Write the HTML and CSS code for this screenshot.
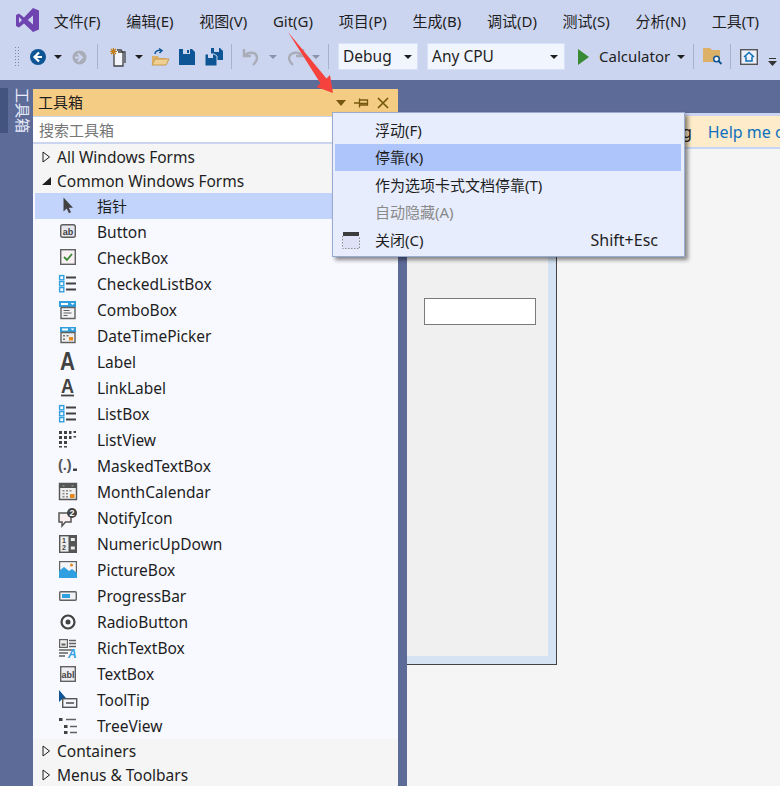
FILE: index.html
```html
<!DOCTYPE html>
<html lang="zh">
<head>
<meta charset="utf-8">
<title>Visual Studio</title>
<link rel="stylesheet" href="styles.css">
</head>
<body>
<header class="chrome">
  <nav class="menubar">
    <svg class="logo" width="26" height="26" viewBox="0 0 26 26"><path fill="#6f44b0" d="M19 1l6 2.500v19l-6 2.500-9-8.600-5 4-3-1.500v-11l3-1.500 5 4zM19 8.500l-5.200 4.500 5.200 4.500zM5 10v6l3-3z"/></svg>
    <span>文件(F)</span><span>编辑(E)</span><span>视图(V)</span><span>Git(G)</span><span>项目(P)</span><span>生成(B)</span><span>调试(D)</span><span>测试(S)</span><span>分析(N)</span><span>工具(T)</span>
  </nav>
  <div class="toolbar">
    <i class="grip"></i>
    <svg class="t-back" width="18" height="18" viewBox="0 0 18 18"><circle cx="9" cy="9" r="8" fill="#0e5595"/><path d="M10 4.500L5.500 9l4.500 4.500M6 9h7" fill="none" stroke="#fff" stroke-width="2.200"/></svg>
    <i class="caret t-c1"></i>
    <svg class="t-fwd" width="17" height="17" viewBox="0 0 17 17"><circle cx="8.500" cy="8.500" r="7" fill="#a9adb8"/><path d="M7 4.500l4 4-4 4M4 8.500h6" fill="none" stroke="#ccd5f0" stroke-width="1.800"/></svg>
    <i class="sep t-s1"></i>
    <svg class="t-new" width="20" height="20" viewBox="0 0 20 20"><path d="M5 7v12h9V6l-2-3H8" fill="#f3f5fb" stroke="#424242" stroke-width="1.300"/><path d="M9 5h7v11" fill="none" stroke="#424242" stroke-width="1.300"/><path d="M4.500 1v7M1 4.500h7M2 2l5 5M7 2L2 7" stroke="#c27d1a" stroke-width="1.200"/></svg>
    <i class="caret t-c2"></i>
    <svg class="t-open" width="19" height="18" viewBox="0 0 19 18"><path d="M1 17V8h6l1 2h7v7z" fill="#dcb067"/><path d="M1 17l3-6h14l-3 6z" fill="#f0cf93" stroke="#c99a4b"/><path d="M4 6c0-3 3-4 6-3.500M8 .5l3 2-2.500 2.500" fill="none" stroke="#0e5595" stroke-width="1.500"/></svg>
    <svg class="t-save" width="16" height="16" viewBox="0 0 16 16"><path d="M0 0h13l3 3v13H0z" fill="#0e5595"/><path d="M4 0h7v5H4z" fill="#ccd5f0"/><path d="M8 1h2v3H8z" fill="#0e5595"/><path d="M3 9h10v7H3z" fill="#0e5595"/></svg>
    <svg class="t-saveall" width="18" height="18" viewBox="0 0 18 18"><path d="M6 0h9l3 3v9H6z" fill="#0e5595"/><path d="M9 0h5v4H9z" fill="#ccd5f0"/><path d="M0 6h9l3 2v10H0z" fill="#0e5595" stroke="#ccd5f0"/><path d="M3 6h5v4H3z" fill="#ccd5f0"/></svg>
    <i class="sep t-s2"></i>
    <svg class="t-undo" width="17" height="18" viewBox="0 0 17 18"><path d="M2 1v7h7M2.500 8C6 3 15 3.500 15 10c0 3-2 5-4 7" fill="none" stroke="#a9adb8" stroke-width="2.400"/></svg>
    <i class="caret off t-c3"></i>
    <svg class="t-redo" width="20" height="18" viewBox="0 0 20 18"><path d="M18 1v7h-7M17.500 8C14 3 5 3.500 4 10c0 3 2 5 4 7" fill="none" stroke="#a9adb8" stroke-width="2.400"/></svg>
    <i class="caret off t-c4"></i>
    <i class="sep t-s3"></i>
    <div class="combo c-debug"><span>Debug</span><i class="caret"></i></div>
    <div class="combo c-cpu"><span>Any CPU</span><i class="caret"></i></div>
    <svg class="t-play" width="11" height="16" viewBox="0 0 11 16"><path d="M0 0l11 8-11 8z" fill="#388a34"/></svg>
    <span class="t-run">Calculator</span>
    <i class="caret t-c5"></i>
    <i class="sep t-s4"></i>
    <svg class="t-find" width="19" height="17" viewBox="0 0 19 17"><path d="M0 14V0h7l2 2h8v12z" fill="#dcb067"/><circle cx="13.500" cy="11" r="2.800" fill="#f3f5fb" stroke="#0e5595" stroke-width="1.500"/><path d="M15.500 13l3 3" stroke="#0e5595" stroke-width="1.800"/></svg>
    <i class="sep t-s5"></i>
    <svg class="t-home" width="18" height="16" viewBox="0 0 18 16"><rect x=".7" y=".7" width="16.600" height="14.600" fill="#ecf0fb" stroke="#555"  stroke-width="1.400"/><path d="M4 8l5-4.500L14 8M6 7.500V12h6V7.500" fill="none" stroke="#0e6fb5" stroke-width="1.500"/></svg>
    <svg class="t-more" width="9" height="8" viewBox="0 0 9 8"><path d="M1 0h7v1H1zM0 3h9L4.500 8z" fill="#333"/></svg>
  </div>
</header>

<main class="workspace">
  <aside class="strip">
    <i class="strip-mark"></i>
    <span class="strip-tab">工具箱</span>
  </aside>

  <section class="toolbox">
    <div class="tb-title">
      <span class="tb-name">工具箱</span>
      <svg class="tb-btn" width="12" height="6" viewBox="0 0 12 6"><path d="M1 0h10L6 6z" fill="#755710"/></svg>
      <svg class="tb-btn" width="16" height="10" viewBox="0 0 16 10"><path d="M0 5h5M5.500 .5v9M5.500 2h8v5h-8" fill="none" stroke="#755710" stroke-width="1.300"/><path d="M5.500 5.500h8" stroke="#755710" stroke-width="1.600"/></svg>
      <svg class="tb-btn" width="12" height="12" viewBox="0 0 12 12"><path d="M1 1l10 10M11 1L1 11" stroke="#755710" stroke-width="1.700"/></svg>
    </div>
    <div class="tb-search">搜索工具箱</div>
    <div class="tb-list">
      <div class="group"><svg width="9" height="12" viewBox="0 0 9 12"><path d="M1 1l6.500 5L1 11z" fill="#f5f5f5" stroke="#1e1e1e"/></svg><span>All Windows Forms</span></div>
      <div class="group"><svg width="9" height="12" viewBox="0 0 9 12"><path d="M9 2v8H0z" fill="#1e1e1e"/></svg><span>Common Windows Forms</span></div>

      <div class="item selected"><svg width="20" height="20" viewBox="0 0 20 20"><path d="M5.500 1.500v14l3.200-3 2.300 4.700 2-1-2.200-4.400h4.200z" fill="#424242"/></svg><span>指针</span></div>

      <div class="item"><svg width="20" height="20" viewBox="0 0 20 20"><rect x="2.700" y="2.700" width="14.600" height="12.600" rx="2" fill="#e6e7ee" stroke="#5e5e5e" stroke-width="1.400"/><text class="ico-t" x="10" y="12.500" text-anchor="middle" font-size="9.500">ab</text></svg><span>Button</span></div>

      <div class="item"><svg width="20" height="20" viewBox="0 0 20 20"><rect x="2.700" y="1.700" width="14.600" height="14.600" fill="#f8f0f2" stroke="#616161" stroke-width="1.400"/><path d="M6 9l3 3 5-6" fill="none" stroke="#388a34" stroke-width="1.800"/></svg><span>CheckBox</span></div>

      <div class="item"><svg width="20" height="20" viewBox="0 0 20 20"><g fill="#f8f9ff" stroke="#2f9fe0" stroke-width="1.400"><rect x="1.600" y="1.600" width="4.200" height="4.200"/><rect x="1.600" y="7.600" width="4.200" height="4.200"/><rect x="1.600" y="13.600" width="4.200" height="4.200"/></g><path d="M8 3.500h10M8 9.500h10M8 15.500h10" stroke="#424242" stroke-width="2"/></svg><span>CheckedListBox</span></div>

      <div class="item"><svg width="20" height="20" viewBox="0 0 20 20"><path d="M1 1h17v6H1z" fill="#2f9fe0"/><path d="M3 3h7v2H3zM12.500 3h4l-2 2z" fill="#fff"/><path d="M3 7.500h14v11H3z" fill="#f3f3f6" stroke="#616161" stroke-width="1.400"/><path d="M5.500 10.500h6M5.500 13h8M5.500 15.500h4" stroke="#616161" stroke-width="1.200"/></svg><span>ComboBox</span></div>

      <div class="item"><svg width="20" height="20" viewBox="0 0 20 20"><path d="M2 1h16v5H2z" fill="#2f9fe0"/><path d="M4 2.500h6v2H4zM12.500 2.500h4l-2 2z" fill="#fff"/><path d="M3 6.500h14v10H3z" fill="#eee" stroke="#616161" stroke-width="1.400"/><path d="M5 9h2v1.500H5zM8.500 9h2v1.500h-2zM5 12.500h2V14H5z" fill="#757575"/><path d="M11 11h4v3.500h-4z" fill="#e5871d"/></svg><span>DateTimePicker</span></div>

      <div class="item"><svg width="20" height="20" viewBox="0 0 20 20"><text class="ico-a" x="2" y="18" font-size="25" textLength="15" lengthAdjust="spacingAndGlyphs">A</text></svg><span>Label</span></div>

      <div class="item"><svg width="20" height="20" viewBox="0 0 20 20"><text class="ico-a" x="3" y="15" font-size="21" textLength="13" lengthAdjust="spacingAndGlyphs">A</text><path d="M3 17.500h13" stroke="#424242" stroke-width="1.800"/></svg><span>LinkLabel</span></div>

      <div class="item"><svg width="20" height="20" viewBox="0 0 20 20"><g fill="#f8f9ff" stroke="#2f9fe0" stroke-width="1.400"><rect x="1.600" y="1.600" width="4.200" height="4.200"/><rect x="1.600" y="7.600" width="4.200" height="4.200"/><rect x="1.600" y="13.600" width="4.200" height="4.200"/></g><path d="M8 3.500h10M8 9.500h10M8 15.500h10" stroke="#424242" stroke-width="2"/></svg><span>ListBox</span></div>

      <div class="item"><svg width="20" height="20" viewBox="0 0 20 20"><path d="M1 1h3v3H1zM6 1h3v3H6zM11 1h2.500v3H11zM15.500 1h2.500v2h-2.500zM1 6h3v3H1zM6 6h3v3H6zM11 6h2.500v3H11zM15.500 6h2.500v1.500h-2.500zM1 11h3v3H1zM6 11h3v3H6zM1 16h3v1.500H1zM6 16h3v1.500H6z" fill="#424242"/></svg><span>ListView</span></div>

      <div class="item"><svg width="20" height="20" viewBox="0 0 20 20"><text class="ico-m" x="0" y="14" font-size="14.500">(.)</text><path d="M15 12.500h4v2.500h-4z" fill="#424242"/></svg><span>MaskedTextBox</span></div>

      <div class="item"><svg width="20" height="20" viewBox="0 0 20 20"><path d="M1.500 1.500h17v16h-17z" fill="#eeeeee" stroke="#555" stroke-width="1.400"/><path d="M1.500 1.500h17v4.500h-17z" fill="#555"/><path d="M4.500 3h2v1.500h-2zM13.500 3h2v1.500h-2zM4.500 8h2v1.500h-2zM8 8h2v1.500H8zM11.500 8h2v1.500h-2zM4.500 11h2v1.500h-2zM8 11h2v1.500H8zM4.500 14h2v1.500h-2zM8 14h2v1.500H8z" fill="#8a8a8a"/><path d="M12 12h4.500v4H12z" fill="#e5871d"/></svg><span>MonthCalendar</span></div>

      <div class="item"><svg width="20" height="20" viewBox="0 0 20 20"><path d="M1 5h12v9H7.500L4 18v-4H1z" fill="#f8eef0" stroke="#555" stroke-width="1.500"/><circle cx="14" cy="5" r="5" fill="#424242"/><text class="ico-w" x="14" y="8.300" text-anchor="middle" font-size="9">2</text></svg><span>NotifyIcon</span></div>

      <div class="item"><svg width="20" height="20" viewBox="0 0 20 20"><rect x="1.700" y="1.700" width="16.600" height="16.600" fill="#eee" stroke="#555" stroke-width="1.400"/><path d="M10.500 1h8.500v18h-8.500z" fill="#555"/><path d="M12.800 4h4v3h-4zM12.800 12.500h4v3h-4z" fill="#eee"/><text class="ico-n" x="6" y="8.500" text-anchor="middle" font-size="7">1</text><text class="ico-n" x="6" y="16" text-anchor="middle" font-size="7">2</text></svg><span>NumericUpDown</span></div>

      <div class="item"><svg width="20" height="20" viewBox="0 0 20 20"><rect x="1.600" y="1.600" width="16.800" height="15.800" fill="#f3f5fb" stroke="#616161" stroke-width="1.200"/><path d="M1 18v-7l5-4 5 4 3-2 5 4v5z" fill="#2f9fe0"/><circle cx="13.500" cy="5" r="1.500" fill="#e5871d"/></svg><span>PictureBox</span></div>

      <div class="item"><svg width="20" height="20" viewBox="0 0 20 20"><rect x="1.700" y="5.700" width="16.600" height="8.600" rx="1" fill="#f0f1f6" stroke="#616161" stroke-width="1.400"/><path d="M4 8h8v4H4z" fill="#2f9fe0"/></svg><span>ProgressBar</span></div>

      <div class="item"><svg width="20" height="20" viewBox="0 0 20 20"><circle cx="10" cy="10" r="6.500" fill="#f8f9ff" stroke="#424242" stroke-width="2.200"/><circle cx="10" cy="10" r="2.500" fill="#424242"/></svg><span>RadioButton</span></div>

      <div class="item"><svg width="20" height="20" viewBox="0 0 20 20"><rect x="1.600" y="1.600" width="7.800" height="7.800" fill="#eee" stroke="#616161" stroke-width="1.200"/><path d="M3.500 5.500h4v2h-4z" fill="#616161"/><path d="M11 2.500h7M11 5.500h7M11 8.500h7M1 12h14M1 15h9M1 18h6" stroke="#616161" stroke-width="1.400"/><text class="ico-r" x="10" y="19.500" font-size="12">A</text></svg><span>RichTextBox</span></div>

      <div class="item"><svg width="20" height="20" viewBox="0 0 20 20"><rect x="2.700" y="2.700" width="14.600" height="14.600" fill="#eeeef2" stroke="#616161" stroke-width="1.400"/><text class="ico-t" x="10" y="13.500" text-anchor="middle" font-size="9">abl</text></svg><span>TextBox</span></div>

      <div class="item"><svg width="20" height="20" viewBox="0 0 20 20"><path d="M1 0v12l3-2.700h5z" fill="#0e5595"/><rect x="4.700" y="8.700" width="14" height="8.600" fill="#f3f5fb" stroke="#555" stroke-width="1.400"/><path d="M8 13h8" stroke="#555" stroke-width="1.600"/></svg><span>ToolTip</span></div>

      <div class="item"><svg width="20" height="20" viewBox="0 0 20 20"><path d="M1 2h3.500v3H1zM6 9h3.500v3H6zM6 15h3.500v3H6z" fill="#424242"/><path d="M8 3.500h10M12 10.500h7M12 16.500h7" stroke="#616161" stroke-width="1.300"/></svg><span>TreeView</span></div>

      <div class="group"><svg width="9" height="12" viewBox="0 0 9 12"><path d="M1 1l6.500 5L1 11z" fill="#f5f5f5" stroke="#1e1e1e"/></svg><span>Containers</span></div>
      <div class="group"><svg width="9" height="12" viewBox="0 0 9 12"><path d="M1 1l6.500 5L1 11z" fill="#f5f5f5" stroke="#1e1e1e"/></svg><span>Menus &amp; Toolbars</span></div>
    </div>
  </section>

  <section class="document">
    <div class="infobar"><span class="info-text">Learning</span><a class="info-link">Help me choose</a></div>
    <div class="designer">
      <div class="form">
        <div class="form-body"><div class="textbox"></div></div>
      </div>
    </div>
  </section>
</main>

<div class="ctx">
  <div class="ctx-item"><span>浮动(F)</span></div>
  <div class="ctx-item active"><span>停靠(K)</span></div>
  <div class="ctx-item"><span>作为选项卡式文档停靠(T)</span></div>
  <div class="ctx-item disabled"><span>自动隐藏(A)</span></div>
  <div class="ctx-item">
    <svg class="ctx-ico" width="18" height="18" viewBox="0 0 18 18"><rect x="1" y="1" width="16" height="16" fill="#dfe2f6"/><path d="M1 1h16v4H1z" fill="#3c3c3c"/><path d="M.5 5v12.500h17V5" fill="none" stroke="#8a8a8a" stroke-dasharray="1.500 1.500"/></svg>
    <span>关闭(C)</span><span class="shortcut">Shift+Esc</span>
  </div>
</div>

<svg class="arrow" width="60" height="70" viewBox="0 0 60 70"><path d="M1 1L39.500 47.500 43 44 46 62 29.500 56 33.500 52.500z" fill="#f5423c"/></svg>
</body>
</html>
```

FILE: styles.css
```css
* { box-sizing: border-box; }
html, body { margin: 0; height: 786px; overflow: hidden; }
body {
  position: relative;
  width: 780px;
  font: 15px/20px "Noto Sans", "Noto Sans CJK SC", sans-serif;
  color: #1e1e1e;
  background: #5d6b99;
}
i { display: block; font-style: normal; flex: none; }
svg { display: block; flex: none; overflow: visible; }

/* window chrome */
.chrome { height: 80px; background: #ccd5f0; }
.menubar { height: 41px; padding: 8px 0 0 14px; display: flex; align-items: flex-start; gap: 25.700px; white-space: nowrap; }
.menubar span { line-height: 26px; }
.logo { margin-right: -12px; margin-top: -1px; }

.toolbar { height: 39px; display: flex; align-items: center; padding: 0 0 8px 14px; }
.grip {
  width: 6px; height: 21px;
  background: radial-gradient(circle, #7d869e 0.8px, transparent 1px) 0 0 / 3px 3px;
}
.caret { width: 0; height: 0; border: 4px solid transparent; border-top: 4px solid #1e1e1e; border-bottom: 0; }
.caret.off { border-top-color: #8c93a8; }
.sep { width: 1px; height: 25px; background: #a6b0cf; }
.t-back { margin-left: 9px; }
.t-c1 { margin-left: 7px; }
.t-fwd { margin-left: 9px; margin-top: 1px; }
.t-s1 { margin-left: 9px; }
.t-new { margin-left: 11px; }
.t-c2 { margin-left: 6px; }
.t-open { margin-left: 8px; }
.t-save { margin-left: 9px; }
.t-saveall { margin-left: 10px; }
.t-s2 { margin-left: 8px; }
.t-undo { margin-left: 10px; }
.t-c3 { margin-left: 10px; }
.t-redo { margin-left: 8px; }
.t-c4 { margin-left: 7px; }
.t-s3 { margin-left: 8px; }
.combo {
  height: 27px; display: flex; align-items: center; justify-content: space-between;
  background: #f1f5fe; border: 1px solid #d8e1f8; padding: 0 5px 0 4px;
}
.combo span { font-size: 15.500px; margin-top: -2px; }
.c-debug { width: 80px; margin-left: 9px; }
.c-cpu { width: 138px; margin-left: 9px; padding-right: 6px; }
.t-play { margin-left: 13px; }
.t-run { margin-left: 10px; font-size: 15px; margin-top: -2px; }
.t-c5 { margin-left: 7px; }
.t-s4 { margin-left: 8px; }
.t-find { margin-left: 9px; }
.t-s5 { margin-left: 8px; }
.t-home { margin-left: 9px; }
.t-more { margin-left: 10px; margin-top: 11px; }

/* workspace */
.workspace { height: 706px; display: flex; align-items: flex-start; background: #5d6b99; }
.strip { width: 33px; height: 100%; position: relative; padding: 8px 0 0 15px; flex: none; }
.strip-mark { position: absolute; left: 0; top: 8px; width: 8px; height: 45px; background: #43557f; }
.strip-tab {
  display: block; writing-mode: vertical-rl; text-orientation: sideways;
  font-size: 15px; line-height: 16px; color: #e8ecfb; height: 46px;
}

/* toolbox */
.toolbox { width: 365px; height: 697px; margin-top: 9px; display: flex; flex-direction: column; flex: none; overflow: hidden; background: #f8f9ff; }
.tb-title { height: 27px; flex: none; background: #f5cc84; display: flex; align-items: center; padding: 0 9px 0 5px; }
.tb-name { flex: 1; margin-top: -2px; }
.tb-btn + .tb-btn { margin-left: 6px; }
.tb-btn:nth-child(3) { margin-left: 7px; margin-right: 1px; }
.tb-search { height: 28px; flex: none; background: #fff; color: #767676; padding: 3px 6px 0; border-top: 1px solid #ccd5f0; border-bottom: 2px solid #ccd5f0; }
.tb-list { flex: 1; font-size: 15.500px; }
.group { height: 24px; display: flex; align-items: center; background: #f5f5f5; padding-left: 9px; gap: 6px; white-space: nowrap; }
.group:first-child { padding-top: 2px; }
.group:nth-child(2) { height: 25px; }
.item { height: 26px; display: flex; align-items: center; padding-left: 25px; gap: 19px; white-space: nowrap; }
.item.selected { background: #c2d4fc; margin-left: 2px; padding-left: 23px; font-size: 15px; }
.ico-t { font: bold 9px "Liberation Sans", sans-serif; fill: #424242; }
.ico-a { font-family: "Liberation Sans", sans-serif; font-weight: bold; fill: #424242; }
.ico-m { font-family: "Liberation Sans", sans-serif; font-weight: bold; fill: #555; }
.ico-w { font-family: "Liberation Sans", sans-serif; font-weight: bold; fill: #fff; }
.ico-n { font-family: "Liberation Sans", sans-serif; font-weight: bold; fill: #424242; }
.ico-r { font-family: "Liberation Sans", sans-serif; font-weight: bold; font-style: italic; fill: #2f9fe0; }

/* document */
.document { flex: 1; height: 673px; margin: 33px 0 0 9px; background: #f5f5f5; overflow: hidden; border-top: 3px solid #ccd5f0; }
.infobar { height: 33px; background: #fdebc9; border-bottom: 2px solid #c6d6f6; display: flex; align-items: center; padding-left: 218px; white-space: nowrap; font-size: 16px; }
.info-link { color: #0e70c0; margin-left: 16px; }
.designer { padding-top: 30px; }
.form { width: 150px; height: 486px; border: solid #444; border-width: 0 1px 1px 0; background: #d5e3f2; padding: 0 8px 8px 0; }
.form-body { height: 100%; background: #f0f0f0; padding: 119px 0 0 17px; }
.textbox { width: 112px; height: 27px; background: #fff; border: 1px solid #7a7a7a; }

/* overlays */
.ctx {
  position: absolute; left: 332px; top: 112px; width: 353px; height: 145px;
  background: #e7edfd; border: 1px solid #9aabd0; padding: 3px 3px 0 2px;
  box-shadow: 3px 3px 4px rgba(0, 0, 0, .45);
}
.ctx-item { height: 27.500px; display: flex; align-items: center; padding-left: 40px; position: relative; }
.ctx-item.active { background: #aec5fc; }
.ctx-item.disabled { color: #8a8a8a; }
.ctx-ico { position: absolute; left: 7px; top: 5px; }
.shortcut { margin-left: auto; margin-right: 23px; font-size: 16px; }
.arrow { position: absolute; left: 287px; top: 31px; }
```
